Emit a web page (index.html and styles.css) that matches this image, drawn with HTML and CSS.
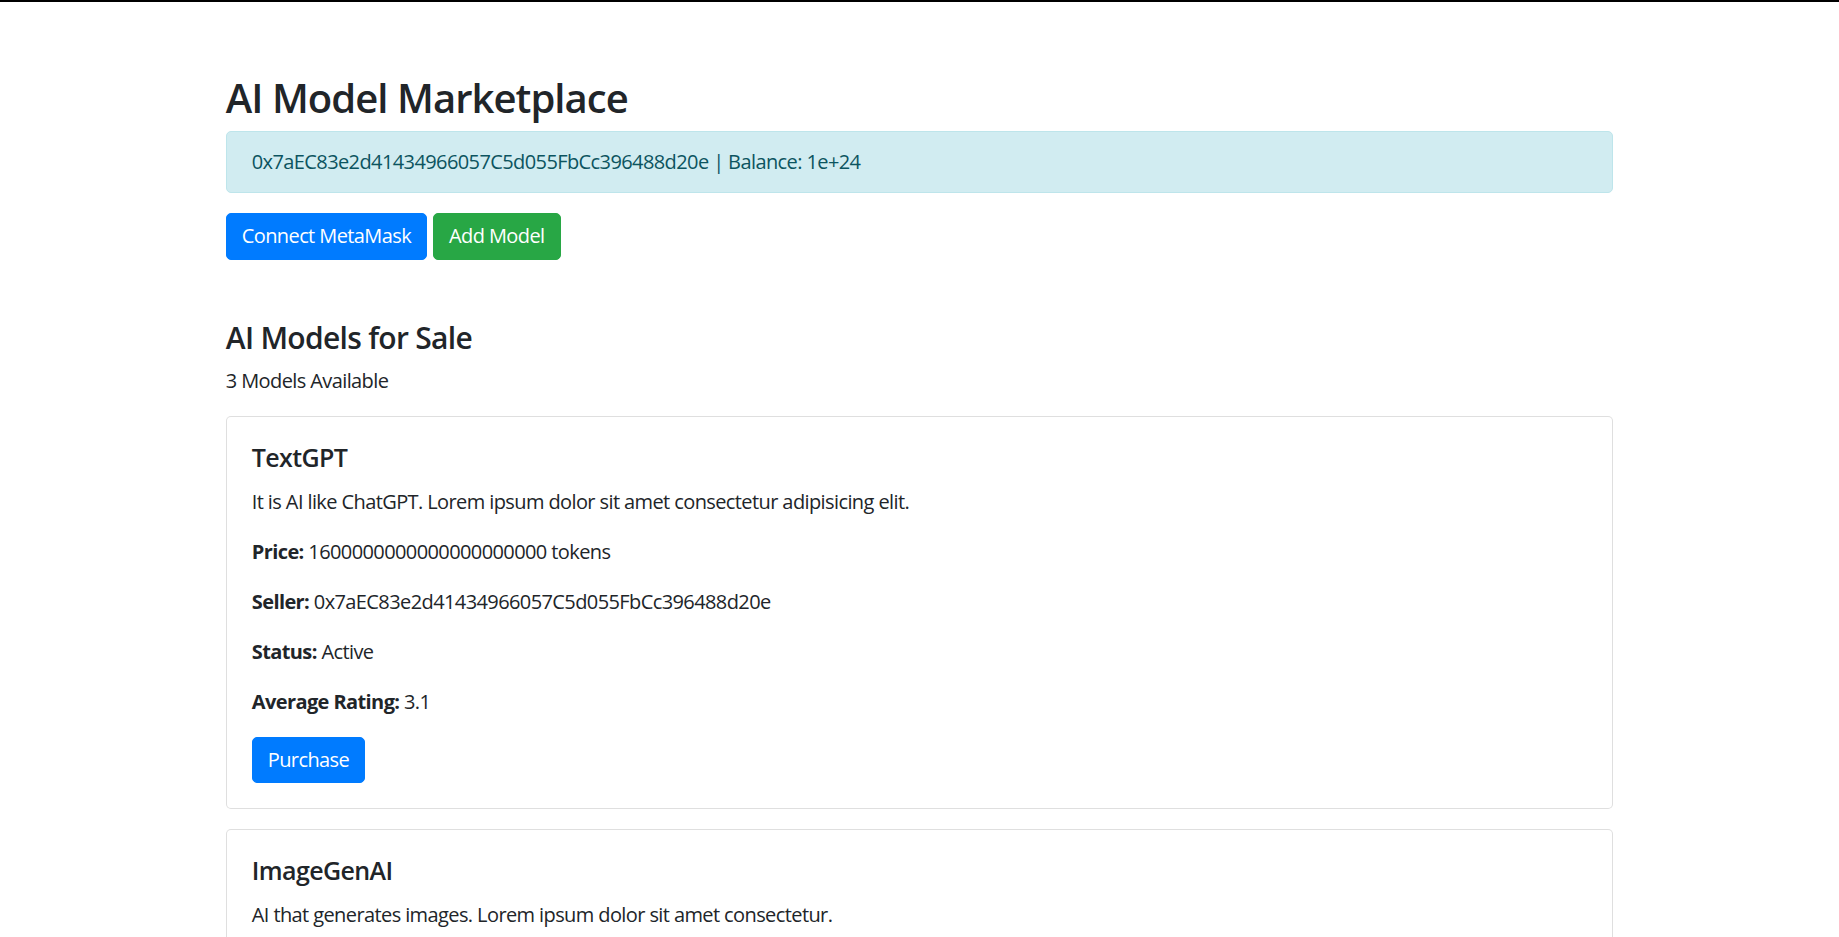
FILE: index.html
```html
<!DOCTYPE html>
<html lang="en">
<head>
<meta charset="utf-8">
<title>AI Model Marketplace</title>
<link rel="stylesheet" href="styles.css">
</head>
<body>
<div class="topbar"></div>
<div class="container">
  <h2 class="page-title">AI Model Marketplace</h2>
  <div class="alert alert-info">0x7aEC83e2d41434966057C5d055FbCc396488d20e | Balance: 1e+24</div>
  <div class="btn-row">
    <button class="btn btn-primary">Connect MetaMask</button>
    <button class="btn btn-success">Add Model</button>
  </div>

  <h4 class="section-title">AI Models for Sale</h4>
  <p class="text">3 Models Available</p>

  <div class="card">
    <div class="card-body">
      <h5 class="card-title">TextGPT</h5>
      <p class="text">It is AI like ChatGPT. Lorem ipsum dolor sit amet consectetur adipisicing elit.</p>
      <p class="text"><strong>Price:</strong> 1600000000000000000000 tokens</p>
      <p class="text"><strong>Seller:</strong> 0x7aEC83e2d41434966057C5d055FbCc396488d20e</p>
      <p class="text"><strong>Status:</strong> Active</p>
      <p class="text"><strong>Average Rating:</strong> 3.1</p>
      <button class="btn btn-primary">Purchase</button>
    </div>
  </div>

  <div class="card">
    <div class="card-body">
      <h5 class="card-title">ImageGenAI</h5>
      <p class="text">AI that generates images. Lorem ipsum dolor sit amet consectetur.</p>
      <p class="text"><strong>Price:</strong> 2500000000000000000000 tokens</p>
      <p class="text"><strong>Seller:</strong> 0x7aEC83e2d41434966057C5d055FbCc396488d20e</p>
      <p class="text"><strong>Status:</strong> Active</p>
      <p class="text"><strong>Average Rating:</strong> 4.2</p>
      <button class="btn btn-primary">Purchase</button>
    </div>
  </div>

  <div class="card">
    <div class="card-body">
      <h5 class="card-title">VoiceAI</h5>
      <p class="text">AI that converts text to speech. Lorem ipsum dolor sit amet.</p>
      <p class="text"><strong>Price:</strong> 1200000000000000000000 tokens</p>
      <p class="text"><strong>Seller:</strong> 0x7aEC83e2d41434966057C5d055FbCc396488d20e</p>
      <p class="text"><strong>Status:</strong> Active</p>
      <p class="text"><strong>Average Rating:</strong> 3.8</p>
      <button class="btn btn-primary">Purchase</button>
    </div>
  </div>
</div>
</body>
</html>
```
FILE: styles.css
```css
* { box-sizing: border-box; }

html, body {
  margin: 0;
  padding: 0;
  background: #fff;
}

body {
  font-family: "Open Sans", "Noto Sans", sans-serif;
  font-size: 20px;
  line-height: 30px;
  color: #212529;
  letter-spacing: -0.6px;
}

.topbar {
  height: 2px;
  background: #000;
}

.container {
  max-width: 1425px;
  margin: 0 auto;
  padding: 71.5px 18.75px 40px;
}

.page-title {
  margin: 0 0 9.5px;
  font-size: 40px;
  line-height: 48px;
  font-weight: 600;
  letter-spacing: -0.95px;
}

.alert {
  padding: 15px 25px;
  border: 1px solid transparent;
  border-radius: 5px;
  margin-bottom: 20px;
}

.alert-info {
  background: #d1ecf1;
  border-color: #bee5eb;
  color: #0c5460;
}

.btn-row {
  display: flex;
  gap: 6px;
}

.btn {
  display: inline-block;
  font-family: inherit;
  font-size: 20px;
  line-height: 30px;
  letter-spacing: -0.6px;
  font-weight: 400;
  padding: 7.25px 15px;
  border: 1px solid transparent;
  border-radius: 5px;
  color: #fff;
  cursor: pointer;
  text-align: center;
}

.btn-primary {
  background: #007bff;
  border-color: #007bff;
}

.btn-success {
  background: #28a745;
  border-color: #28a745;
}

.section-title {
  margin: 60px 0 10px;
  font-size: 30px;
  line-height: 36px;
  font-weight: 600;
  letter-spacing: -0.7px;
}

.text {
  margin: 0 0 20px;
}

.text strong {
  font-weight: 700;
}

.card {
  border: 1px solid rgba(0, 0, 0, 0.125);
  border-radius: 5px;
  margin-bottom: 20px;
  background: #fff;
}

.card-body {
  padding: 25px;
}

.card-title {
  margin: 0 0 15px;
  font-size: 25px;
  line-height: 30px;
  font-weight: 600;
  letter-spacing: -0.6px;
}
```
